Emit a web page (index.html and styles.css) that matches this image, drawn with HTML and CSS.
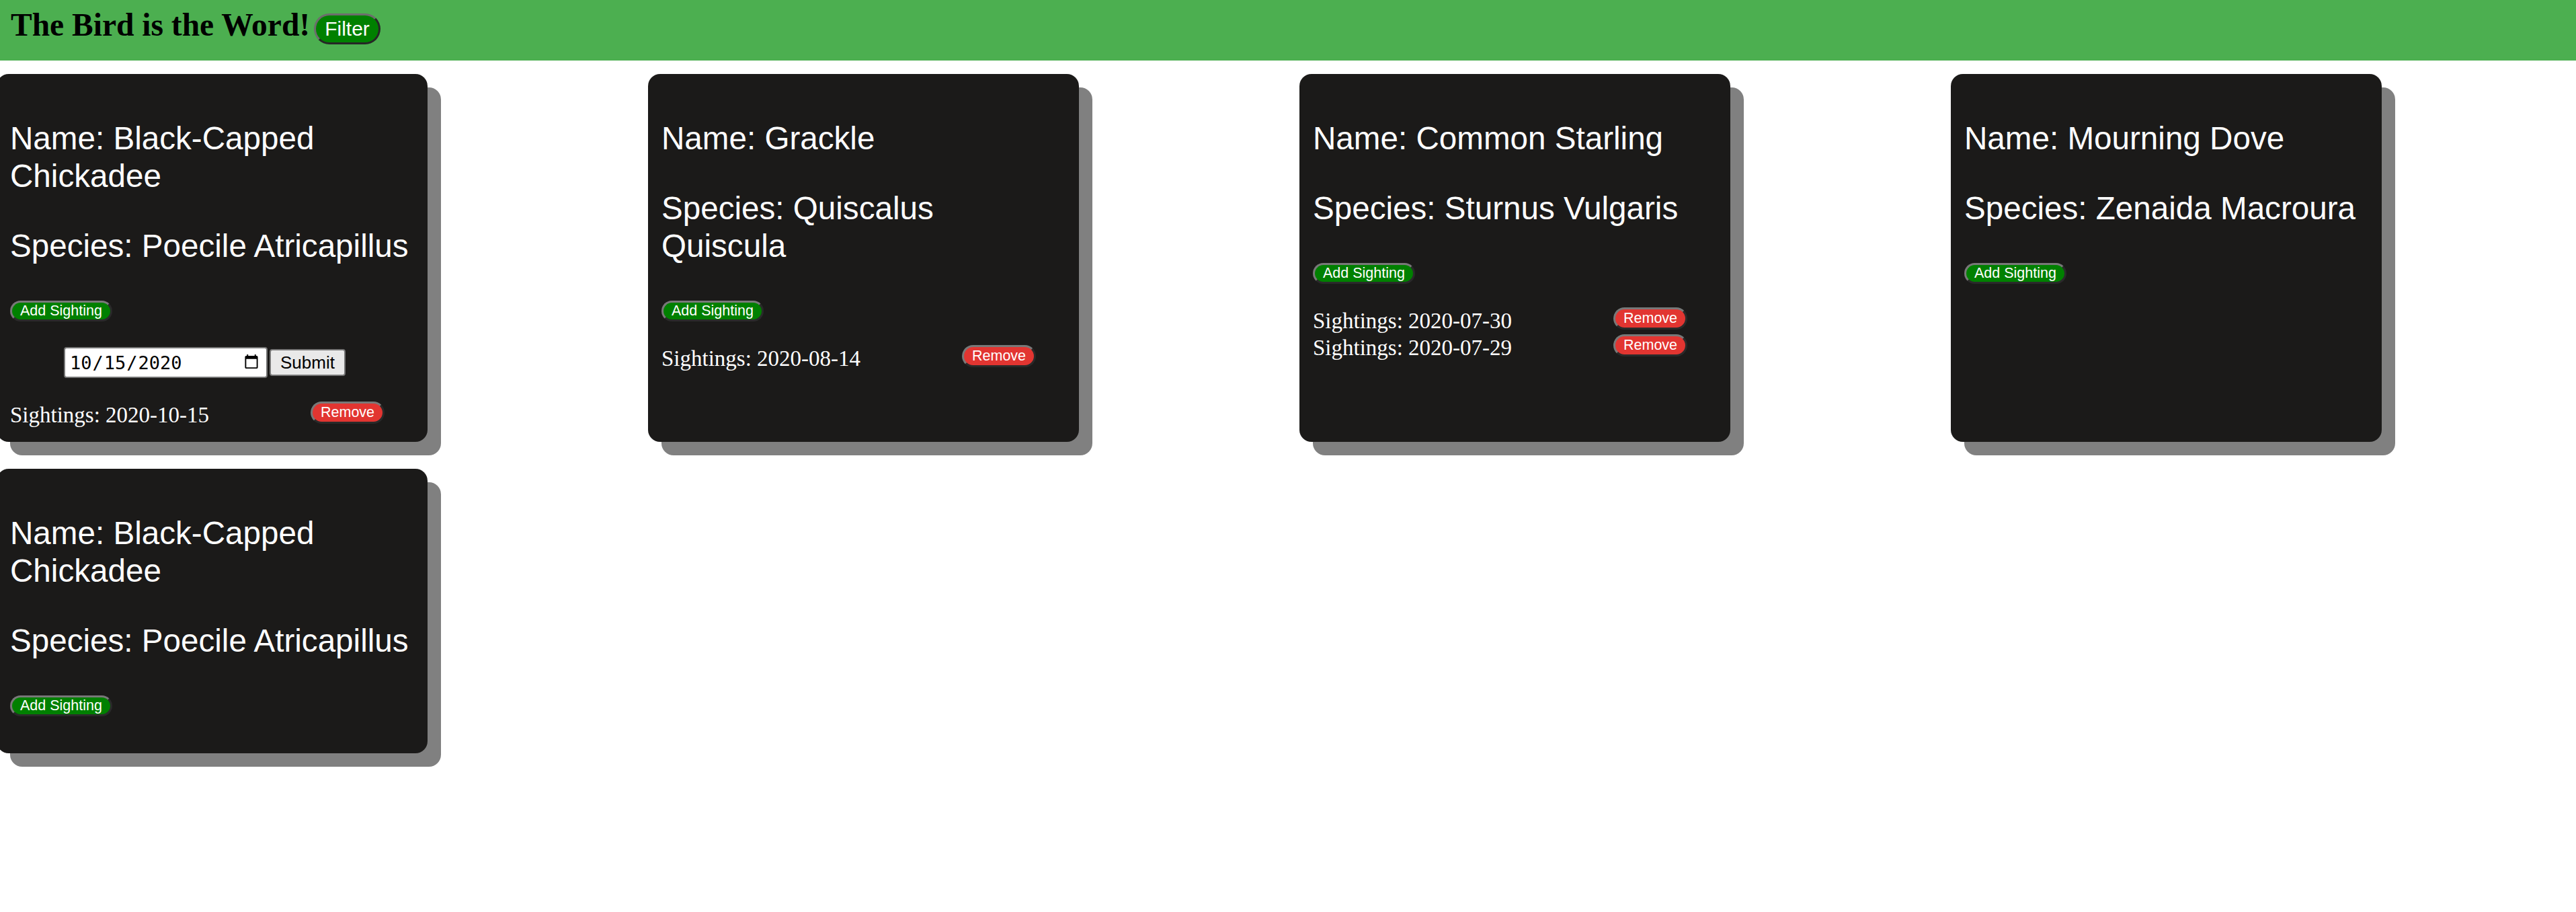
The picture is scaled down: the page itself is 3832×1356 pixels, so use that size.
FILE: index.html
```html
<!DOCTYPE html>
<html lang="en">
<head>
<meta charset="utf-8">
<title>The Bird is the Word!</title>
<link rel="stylesheet" href="styles.css">
</head>
<body>
<header class="topbar">
  <h1 class="title">The Bird is the Word!</h1><button class="pill pill-filter">Filter</button>
</header>
<main class="board">
  <section class="card">
    <h3 class="card-line">Name: Black-Capped Chickadee</h3>
    <h3 class="card-line">Species: Poecile Atricapillus</h3>
    <div class="actions"><button class="pill pill-add">Add Sighting</button></div>
    <form class="sighting-form">
      <input class="date-input" type="date" value="2020-10-15"><button class="submit-btn" type="button">Submit</button>
    </form>
    <div class="sightings">
      <div class="sighting-row"><span class="sighting-text">Sightings: 2020-10-15</span><button class="pill pill-remove">Remove</button></div>
    </div>
  </section>
  <section class="card">
    <h3 class="card-line">Name: Grackle</h3>
    <h3 class="card-line">Species: Quiscalus Quiscula</h3>
    <div class="actions"><button class="pill pill-add">Add Sighting</button></div>
    <div class="sightings">
      <div class="sighting-row"><span class="sighting-text">Sightings: 2020-08-14</span><button class="pill pill-remove">Remove</button></div>
    </div>
  </section>
  <section class="card">
    <h3 class="card-line">Name: Common Starling</h3>
    <h3 class="card-line">Species: Sturnus Vulgaris</h3>
    <div class="actions"><button class="pill pill-add">Add Sighting</button></div>
    <div class="sightings">
      <div class="sighting-row"><span class="sighting-text">Sightings: 2020-07-30</span><button class="pill pill-remove">Remove</button></div>
      <div class="sighting-row"><span class="sighting-text">Sightings: 2020-07-29</span><button class="pill pill-remove">Remove</button></div>
    </div>
  </section>
  <section class="card">
    <h3 class="card-line">Name: Mourning Dove</h3>
    <h3 class="card-line">Species: Zenaida Macroura</h3>
    <div class="actions"><button class="pill pill-add">Add Sighting</button></div>
    <div class="sightings"></div>
  </section>
  <section class="card">
    <h3 class="card-line">Name: Black-Capped Chickadee</h3>
    <h3 class="card-line">Species: Poecile Atricapillus</h3>
    <div class="actions"><button class="pill pill-add">Add Sighting</button></div>
    <div class="sightings"></div>
  </section>
</main>
</body>
</html>
```
FILE: styles.css
```css
html, body {
  margin: 0;
  padding: 0;
  background: #ffffff;
}

body {
  font-family: "Liberation Serif", "Times New Roman", serif;
  font-size: 33px;
  color: #000;
  min-height: 1356px;
}

.topbar {
  box-sizing: border-box;
  height: 90px;
  background: #4caf50;
  display: flex;
  align-items: baseline;
  padding: 0 16px;
}

.title {
  margin: 0;
  padding-top: 10px;
  font: bold 47.5px/55px "Liberation Serif", "Times New Roman", serif;
  color: #000;
}

.pill {
  font-family: "Liberation Sans", Arial, sans-serif;
  color: #fff;
  border-style: solid;
  border-width: 3px;
  border-color: #787878 #2a2a2a #2a2a2a #787878;
  border-radius: 999px;
  cursor: pointer;
  margin: 0;
}

.pill-filter {
  margin-left: 6px;
  height: 46px;
  padding: 0 13px;
  font-size: 30px;
  line-height: 34px;
  background: #008000;
  border-color: #6c6c6c #262626 #262626 #6c6c6c;
}

.pill-add {
  height: 31px;
  padding: 0 12px;
  font-size: 21.5px;
  line-height: 25px;
  background: #008000;
}

.pill-remove {
  height: 33px;
  padding: 0 12px;
  font-size: 21.5px;
  line-height: 25px;
  background: #e23531;
}

.board {
  display: grid;
  grid-template-columns: repeat(4, 641px);
  column-gap: 328px;
  row-gap: 40px;
  margin: 20px 0 0 -5px;
  padding-bottom: 60px;
}

.card {
  background: #1b1a19;
  color: #fff;
  border-radius: 18px;
  box-shadow: 20px 20px 0 #808080;
  padding: 20px;
}

.card-line {
  margin: 48px 0 0 0;
  font: normal 47.6px/56px "Liberation Sans", Arial, sans-serif;
  color: #fff;
}

.actions {
  margin-top: 53px;
  display: flex;
}

.sighting-form {
  margin: 38px 0 0 80px;
  display: flex;
  align-items: center;
  gap: 3px;
}

.date-input {
  box-sizing: border-box;
  width: 303px;
  height: 46px;
  margin: 0;
  padding: 0 10px 0 6px;
  border: 2px solid #767676;
  border-radius: 4px;
  background: #fff;
  color: #000;
  font: 27px "DejaVu Sans Mono", "Liberation Mono", monospace;
}

.date-input::-webkit-calendar-picker-indicator {
  width: 24px;
  height: 26px;
  padding: 0;
  margin: 0;
}

.submit-btn {
  box-sizing: border-box;
  height: 40px;
  margin: 0;
  padding: 0 14px;
  border: 2px solid #767676;
  border-radius: 4px;
  background: #e9e9e9;
  color: #000;
  font: 26px "Liberation Sans", Arial, sans-serif;
}

.sightings {
  margin-top: 35px;
}

.sighting-row {
  display: grid;
  grid-template-columns: 447px auto;
  justify-content: start;
  align-items: start;
  height: 40px;
}

.sighting-text {
  font: 33px/40px "Liberation Serif", "Times New Roman", serif;
  color: #fff;
}
```
